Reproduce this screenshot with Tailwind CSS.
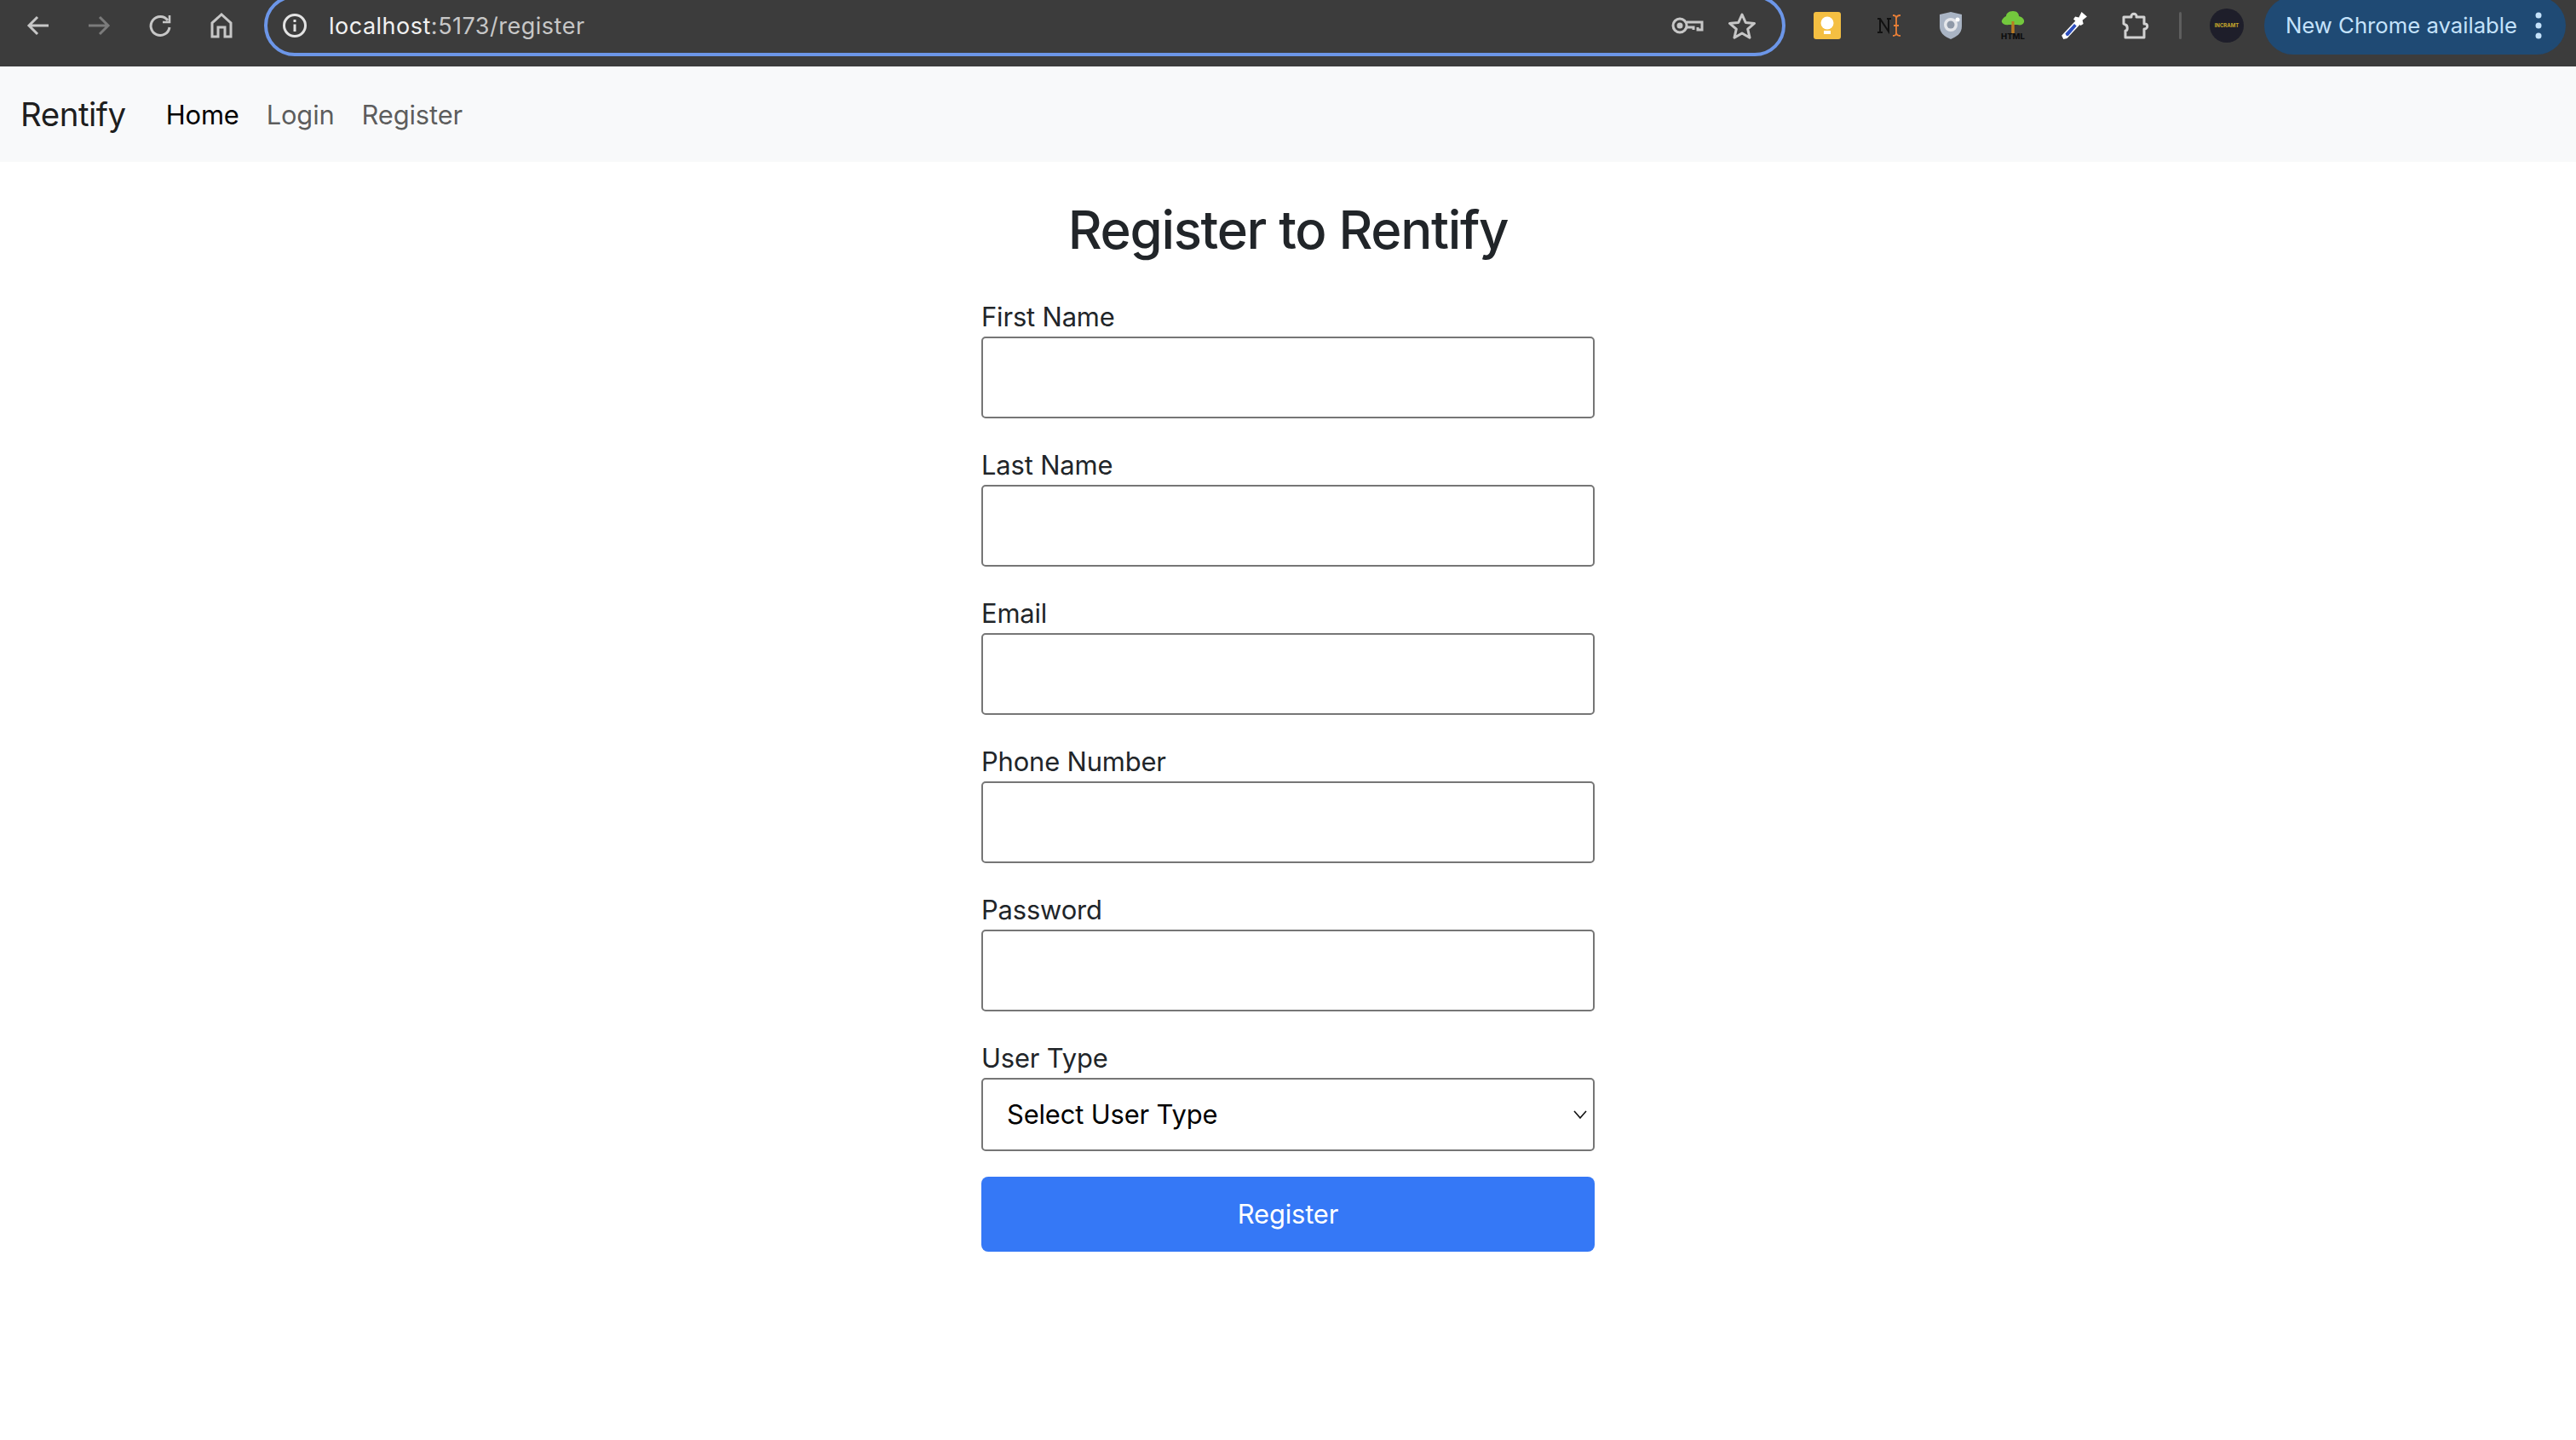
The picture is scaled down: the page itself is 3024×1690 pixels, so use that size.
<!DOCTYPE html>
<html lang="en">
<head>
    <meta charset="UTF-8">
    <meta name="viewport" content="width=device-width, initial-scale=1.0">
    <title>Rentify</title>
    <script src="https://cdn.jsdelivr.net/npm/@tailwindcss/browser@4"></script>
</head>
<body class="bg-white font-['Inter',sans-serif] text-[#212529] w-[3024px] h-[1690px] overflow-hidden">
    <!-- browser toolbar -->
    <div class="h-[78px] pb-[18px] bg-[#3c3c3c] flex items-center text-[#c7c7c7] overflow-hidden">
        <svg class="ml-[30px] w-[30px] h-[30px]" viewBox="0 0 30 30" fill="none" stroke="#c7c7c7" stroke-width="3"><path d="M27 15H5M14 5L4 15l10 10"/></svg>
        <svg class="ml-[41px] w-[30px] h-[30px]" viewBox="0 0 30 30" fill="none" stroke="#7b7b7b" stroke-width="3"><path d="M3 15h22M16 5l10 10-10 10"/></svg>
        <svg class="ml-[42px] w-[30px] h-[30px]" viewBox="0 0 30 30" fill="none" stroke="#c7c7c7" stroke-width="3"><path d="M24 9a11 11 0 1 0 2 8"/><path d="M26 3v8h-8" stroke-width="2.6"/></svg>
        <svg class="ml-[42px] w-[30px] h-[30px]" viewBox="0 0 30 30" fill="none" stroke="#c7c7c7" stroke-width="3"><path d="M4 28V12L15 2l11 10v16h-7V17h-8v11z"/></svg>

        <!-- address bar -->
        <div class="ml-[35px] w-[1786px] h-[72px] shrink-0 rounded-[38px] border-[4px] border-[#6c96e8] flex items-center">
            <svg class="ml-[17px] w-[30px] h-[30px]" viewBox="0 0 30 30" fill="none" stroke="#e3e3e3" stroke-width="3"><circle cx="15" cy="15" r="12.500"/><path d="M15 13.500V22"/><path d="M15 8v3"/></svg>
            <div class="ml-[25px] text-[27px] leading-none tracking-[0.5px] text-[#c7c7c7]"><span class="text-[#f1f1f1]">localhost</span>:5173/register</div>
            <svg class="ml-auto w-[38px] h-[22px]" viewBox="0 0 38 22" fill="none" stroke="#c7c7c7" stroke-width="3"><circle cx="10" cy="11" r="8"/><circle cx="10" cy="11" r="2" fill="#c7c7c7"/><path d="M18 7h18v9h-5v-3M26 16v-3h-8"/></svg>
            <svg class="ml-[28px] mr-[30px] w-[34px] h-[32px]" viewBox="0 0 34 32" fill="none" stroke="#c7c7c7" stroke-width="3" stroke-linejoin="round"><path d="M17 3l4.200 9.400 10.300 1-7.800 6.800 2.300 10L17 25l-9 5.200 2.300-10-7.800-6.800 10.300-1z"/></svg>
        </div>

        <!-- extensions -->
        <svg class="ml-[33px] w-[32px] h-[32px]" viewBox="0 0 32 32"><rect width="32" height="32" rx="3" fill="#f4bf42"/><circle cx="16" cy="13" r="7.500" fill="#fff"/><rect x="12" y="22" width="8" height="4" fill="#fff"/></svg>
        <svg class="ml-[42px] w-[30px] h-[30px]" viewBox="0 0 30 30" fill="none"><path d="M1 7h3l10 15V7M12 7h5M1 23h6M4 7v16" stroke="#111" stroke-width="2"/><path d="M19 3c4 0 4 2 4 4v16c0 2 0 4-4 4M28 3c-4 0-5 2-5 4v16c0 2 1 4 5 4M20 15h6" stroke="#e97f37" stroke-width="1.800"/></svg>
        <svg class="ml-[44px] w-[26px] h-[32px]" viewBox="0 0 26 32"><path d="M13 0l13 3v14c0 8-6 12-13 15C6 29 0 25 0 17V3z" fill="#a9b4c4"/><circle cx="13" cy="15" r="8" fill="#e4e6ea"/><circle cx="13" cy="15" r="4.500" fill="#8f99a8"/><circle cx="21" cy="9" r="2.500" fill="#fff"/></svg>
        <svg class="ml-[44px] w-[32px] h-[34px]" viewBox="0 0 32 34"><path d="M14.500 12h3v14h-3z" fill="#b97a22"/><path d="M16 0c5 0 7 3 7 6 4 1 7 4 6 7s-4 4-8 3H11c-4 1-7-1-8-3s2-6 5-7c0-3 3-6 8-6z" fill="#73c83d"/><path d="M14.500 12h3v14h-3z" fill="#b97a22"/><text x="16" y="33" text-anchor="middle" font-size="9.500" font-weight="800" fill="#0e0e0e">HTML</text></svg>
        <svg class="ml-[38px] w-[34px] h-[34px]" viewBox="0 0 32 32"><path d="M20 9L3 27l2 4 4-1L25 13z" fill="#fff"/><path d="M17 14L7 25l1.500 2.500 2-.5 9-10.500z" fill="#2d4fbe"/><path d="M18 6l4 1 3-6 6 5-5 4 1 4-3 2-8-7z" fill="#fff"/></svg>
        <svg class="ml-[39px] w-[34px] h-[34px]" viewBox="0 0 34 34" fill="none" stroke="#d2d2d2" stroke-width="3" stroke-linejoin="round"><path d="M3 7h9c-1-5 7-5 6 0h9v8c5-1 5 6 0 6v10H5v-8c3 0 3-6 0-7l-2-1z"/></svg>
        <div class="ml-[34px] w-[3px] h-[32px] rounded bg-[#5e5e5e]"></div>
        <div class="ml-[33px] w-[40px] h-[40px] rounded-full bg-[#1e1e2a] flex items-center justify-center text-[6px] leading-none text-[#c7a92c] font-bold">INCRAMT</div>

        <!-- update pill -->
        <div class="ml-[24px] w-[354px] h-[68px] shrink-0 rounded-[34px] bg-[#1f4a74] flex items-center pl-[25px] text-[#c4e2fb] text-[25.7px] leading-none">
            New Chrome available
            <svg class="ml-[21px] w-[8px] h-[34px]" viewBox="0 0 8 34" fill="#c4e2fb"><circle cx="4" cy="5" r="3.500"/><circle cx="4" cy="17" r="3.500"/><circle cx="4" cy="29" r="3.500"/></svg>
        </div>
    </div>

    <!-- navbar -->
    <nav class="h-[112px] pt-[2px] bg-[#f8f9fa] flex items-center pl-[24px]">
        <a class="text-[38.5px] tracking-[-0.5px] text-black/90 mr-[47px]">Rentify</a>
        <div class="flex items-center gap-[32px] text-[30.9px] tracking-[-0.15px]">
            <a class="text-black">Home</a>
            <a class="text-black/65">Login</a>
            <a class="text-black/65">Register</a>
        </div>
    </nav>

    <main class="w-[720px] mx-auto">
        <h2 class="text-center text-[61.7px] font-[550] tracking-[-1.3px] leading-[74px] mt-[43px] mb-[42px]">Register to Rentify</h2>
        <form class="tracking-[-0.15px]">
            <div class="mb-[32px]">
                <label class="block text-[30.9px] leading-[46px]">First Name</label>
                <input type="text" class="block w-full h-[96px] border-2 border-[#767676] rounded-[5px] bg-white">
            </div>
            <div class="mb-[32px]">
                <label class="block text-[30.9px] leading-[46px]">Last Name</label>
                <input type="text" class="block w-full h-[96px] border-2 border-[#767676] rounded-[5px] bg-white">
            </div>
            <div class="mb-[32px]">
                <label class="block text-[30.9px] leading-[46px]">Email</label>
                <input type="email" class="block w-full h-[96px] border-2 border-[#767676] rounded-[5px] bg-white">
            </div>
            <div class="mb-[32px]">
                <label class="block text-[30.9px] leading-[46px]">Phone Number</label>
                <input type="tel" class="block w-full h-[96px] border-2 border-[#767676] rounded-[5px] bg-white">
            </div>
            <div class="mb-[32px]">
                <label class="block text-[30.9px] leading-[46px]">Password</label>
                <input type="password" class="block w-full h-[96px] border-2 border-[#767676] rounded-[5px] bg-white">
            </div>
            <div class="mb-[30px]">
                <label class="block text-[30.9px] leading-[46px]">User Type</label>
                <div class="relative">
                    <select class="block w-full h-[86px] appearance-none border-2 border-[#767676] rounded-[5px] bg-white pl-[28px] text-[30.9px] tracking-[-0.15px] text-black">
                        <option>Select User Type</option>
                    </select>
                    <svg class="absolute right-[9px] top-[38px] w-[16px] h-[10px]" viewBox="0 0 16 10" fill="none" stroke="#111" stroke-width="1.6"><path d="M1 1l7 8 7-8"/></svg>
                </div>
            </div>
            <button type="button" class="block w-full h-[88px] rounded-[8px] bg-[#3578f6] text-white text-[30.9px]">Register</button>
        </form>
    </main>
</body>
</html>
